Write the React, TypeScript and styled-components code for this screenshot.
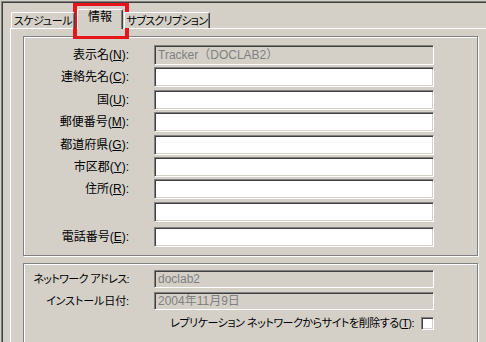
import styled, { createGlobalStyle } from 'styled-components';

const GlobalStyle = createGlobalStyle`
  * { box-sizing: border-box; }
  body {
    margin: 0;
    background: #d4d0c8;
  }
`;

const Window = styled.div`
  position: relative;
  width: 486px;
  height: 342px;
  overflow: hidden;
  background: #d4d0c8;
  padding: 1px 0 0 1px;
  font-family: "Liberation Sans", "Noto Sans CJK JP", sans-serif;
  font-size: 12px;
  font-feature-settings: "palt";
  color: #000;
`;

const Frame = styled.div`
  height: 100%;
  border-top: 1px solid #808080;
  border-left: 1px solid #808080;
  box-shadow: inset 1px 1px 0 #404040;
  padding-left: 8px;
`;

const TabStrip = styled.div`
  position: relative;
  z-index: 1;
  display: flex;
  align-items: flex-end;
  height: 26px;
  padding-left: 1px;
`;

const Tab = styled.div<{ $active?: boolean; $w: number; $ml?: number; $ls?: number }>`
  width: ${({ $w }) => $w}px;
  margin-left: ${({ $ml }) => $ml ?? 0}px;
  height: ${({ $active }) => ($active ? 20 : 16)}px;
  margin-bottom: ${({ $active }) => ($active ? -1 : 0)}px;
  background: #d4d0c8;
  border-top: 1px solid #fff;
  border-left: 1px solid #fff;
  border-right: 1px solid #404040;
  border-radius: 2px 2px 0 0;
  box-shadow: inset -1px 0 0 #808080;
  font-size: ${({ $active }) => ($active ? 12 : 11)}px;
  letter-spacing: ${({ $ls }) => $ls ?? 0}px;
  line-height: ${({ $active }) => ($active ? 13 : 15)}px;
  text-align: center;
  white-space: nowrap;
  padding-top: 1px;
`;

const Panel = styled.div`
  height: 320px;
  border-top: 1px solid #fff;
  border-left: 1px solid #fff;
  padding: 7px 0 0 12px;
`;

const Group = styled.div<{ $h: number; $pt: number; $gap: number; $mt?: number }>`
  width: 455px;
  height: ${({ $h }) => $h}px;
  margin-top: ${({ $mt }) => $mt ?? 0}px;
  border: 1px solid #808080;
  box-shadow: inset 1px 1px 0 #fff, 1px 1px 0 #fff;
  padding-top: ${({ $pt }) => $pt}px;
  display: grid;
  grid-template-columns: 130px 280px;
  align-content: start;
  row-gap: ${({ $gap }) => $gap}px;
`;

const Label = styled.label<{ $h: number; $small?: boolean; $ls?: number }>`
  text-align: right;
  padding-right: 25px;
  font-size: ${({ $small }) => ($small ? 11 : 12)}px;
  letter-spacing: ${({ $ls }) => $ls ?? 0}px;
  line-height: ${({ $h }) => $h}px;
  white-space: nowrap;
`;

const Key = styled.span`
  text-decoration: underline;
`;

const Field = styled.div<{ $h: number; $disabled?: boolean; $mt?: number }>`
  height: ${({ $h }) => $h}px;
  margin-top: ${({ $mt }) => $mt ?? 0}px;
  background: ${({ $disabled }) => ($disabled ? '#d4d0c8' : '#fff')};
  border: 1px solid;
  border-color: #808080 #fff #fff #808080;
  box-shadow: inset 1px 1px 0 #404040, inset -1px -1px 0 #d4d0c8;
  color: #808080;
  font-feature-settings: normal;
  padding-left: 3px;
  line-height: ${({ $h }) => $h - 2}px;
  white-space: nowrap;
  overflow: hidden;
`;

const CheckRow = styled.div`
  grid-column: 1 / 3;
  margin-top: 2px;
  display: flex;
  justify-content: flex-end;
  align-items: center;
  gap: 7px;
  font-size: 11px;
  letter-spacing: -0.45px;
  line-height: 14px;
`;

const CheckBox = styled.span`
  width: 13px;
  height: 13px;
  background: #fff;
  border: 1px solid;
  border-color: #808080 #fff #fff #808080;
  box-shadow: inset 1px 1px 0 #404040, inset -1px -1px 0 #d4d0c8;
`;

const Highlight = styled.div`
  position: absolute;
  left: 73px;
  top: 3px;
  width: 56px;
  height: 36px;
  border: 3px solid #e8141b;
  border-left-width: 4px;
  border-right-width: 4px;
  pointer-events: none;
`;

const contactRows: { label?: string; key?: string }[] = [
  { label: '連絡先名', key: 'C' },
  { label: '国', key: 'U' },
  { label: '郵便番号', key: 'M' },
  { label: '都道府県', key: 'G' },
  { label: '市区郡', key: 'Y' },
  { label: '住所', key: 'R' },
  {},
];

export default function App() {
  return (
    <Window>
      <GlobalStyle />
      <Frame>
        <TabStrip>
          <Tab $w={64} $ls={-0.4}>
            スケジュール
          </Tab>
          <Tab $w={46} $ml={2} $active>
            情報
          </Tab>
          <Tab $w={86} $ml={1} $ls={-0.7}>
            サブスクリプション
          </Tab>
        </TabStrip>
        <Panel>
          <Group $h={220} $pt={8} $gap={2.4}>
            <Label $h={20}>
              表示名(<Key>N</Key>):
            </Label>
            <Field $h={20} $disabled>
              Tracker（DOCLAB2）
            </Field>
            {contactRows.map((row, i) => [
              <Label key={`l${i}`} $h={20}>
                {row.label && (
                  <>
                    {row.label}(<Key>{row.key}</Key>):
                  </>
                )}
              </Label>,
              <Field key={`f${i}`} $h={20} />,
            ])}
            <Label $h={20} style={{ marginTop: 3 }}>
              電話番号(<Key>E</Key>):
            </Label>
            <Field $h={20} $mt={3} />
          </Group>
          <Group $h={100} $pt={6} $gap={4} $mt={7}>
            <Label $h={18} $small $ls={-0.6}>
              ネットワーク アドレス:
            </Label>
            <Field $h={18} $disabled>
              doclab2
            </Field>
            <Label $h={18} $small $ls={-0.1}>
              インストール日付:
            </Label>
            <Field $h={18} $disabled>
              2004年11月9日
            </Field>
            <CheckRow>
              <span>
                レプリケーション ネットワークからサイトを削除する(<Key>T</Key>):
              </span>
              <CheckBox />
            </CheckRow>
          </Group>
        </Panel>
      </Frame>
      <Highlight />
    </Window>
  );
}
